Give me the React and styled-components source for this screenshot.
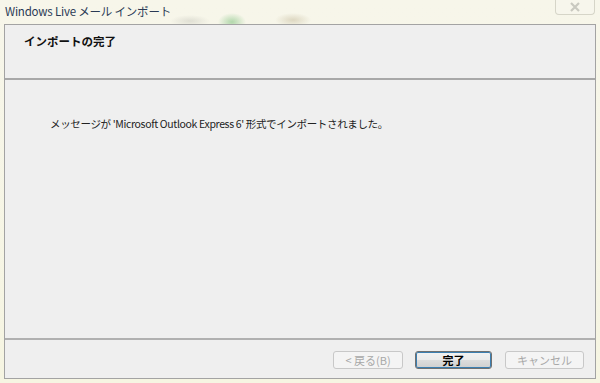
import React from "react";
import styled, { createGlobalStyle } from "styled-components";

const Global = createGlobalStyle`
  html, body { margin: 0; padding: 0; }
  body {
    width: 600px; height: 383px; overflow: hidden;
    font-family: "Noto Sans CJK JP", "Liberation Sans", sans-serif;
  }
`;

const Frame = styled.div`
  width: 600px;
  height: 383px;
  box-sizing: border-box;
  display: flex;
  flex-direction: column;
  padding: 0 4px 4px 4px;
  background:
    radial-gradient(ellipse 14px 9px at 232px 22px, rgba(120,190,120,0.55), transparent),
    radial-gradient(ellipse 18px 7px at 293px 20px, rgba(200,190,160,0.55), transparent),
    radial-gradient(ellipse 20px 6px at 190px 21px, rgba(200,200,190,0.5), transparent),
    linear-gradient(180deg, #f7f6ea 0%, #f6f5e2 100%);
`;

const TitleBar = styled.div`
  height: 24px;
  flex: none;
  display: flex;
  align-items: flex-start;
  justify-content: space-between;
`;

const Title = styled.div`
  font-family: "Noto Sans CJK JP", "Liberation Sans", sans-serif;
  font-size: 11.5px;
  letter-spacing: -0.2px;
  line-height: 14px;
  padding: 4px 0 0 1px;
  color: #2a3a55;
`;

const CloseButton = styled.div`
  width: 40px;
  height: 15px;
  margin-right: 1px;
  box-sizing: border-box;
  border: 1px solid #d6d5c8;
  border-top: none;
  border-radius: 0 0 4px 4px;
  background: #f7f6ec;
  display: flex;
  align-items: center;
  justify-content: center;
`;

const Client = styled.div`
  flex: 1;
  display: flex;
  flex-direction: column;
  border: 1px solid #a3a3a3;
  background: #efefef;
`;

const Header = styled.div`
  height: 55px;
  flex: none;
  box-sizing: border-box;
  padding: 8px 0 0 19px;
  border-bottom: 2px solid #a8a8a8;
  font-size: 11.5px;
  font-weight: bold;
  color: #111;
`;

const Body = styled.div`
  flex: 1;
  padding: 36px 0 0 45px;
  font-size: 10.5px;
  color: #222;
  letter-spacing: -0.35px;
`;

const Footer = styled.div`
  height: 40px;
  flex: none;
  box-sizing: border-box;
  border-top: 2px solid #b0b0b0;
  display: flex;
  align-items: flex-start;
  justify-content: flex-end;
  padding: 11px 11px 0 0;
`;

const Button = styled.div`
  width: ${(p) => p.w}px;
  height: 18px;
  margin-left: ${(p) => p.ml}px;
  box-sizing: border-box;
  border-radius: 3px;
  border: 1px solid ${(p) => (p.primary ? "#707070" : "#c8c8c8")};
  background: ${(p) =>
    p.primary
      ? "linear-gradient(180deg,#f2f2f2 0%,#ebebeb 50%,#dddddd 51%,#cfcfcf 100%)"
      : "#f4f4f4"};
  box-shadow: ${(p) => (p.primary ? "inset 0 0 0 1px #3c7fb1" : "none")};
  display: flex;
  align-items: center;
  justify-content: center;
  font-size: 11px;
  line-height: 1;
  color: ${(p) => (p.primary ? "#000" : "#a8a8a8")};
  font-weight: ${(p) => (p.primary ? "bold" : "normal")};
`;

export default function App() {
  return (
    <>
      <Global />
      <Frame>
        <TitleBar>
          <Title>Windows Live メール インポート</Title>
          <CloseButton>
            <svg width="12" height="10" viewBox="0 0 12 10">
              <path d="M2 1 L10 9 M10 1 L2 9" stroke="#c9c9c0" strokeWidth="2.2" fill="none" />
            </svg>
          </CloseButton>
        </TitleBar>
        <Client>
          <Header>インポートの完了</Header>
          <Body>メッセージが 'Microsoft Outlook Express 6' 形式でインポートされました。</Body>
          <Footer>
            <Button w={70} ml={0}>&lt; 戻る(B)</Button>
            <Button w={77} ml={12} primary>完了</Button>
            <Button w={79} ml={13}>キャンセル</Button>
          </Footer>
        </Client>
      </Frame>
    </>
  );
}
